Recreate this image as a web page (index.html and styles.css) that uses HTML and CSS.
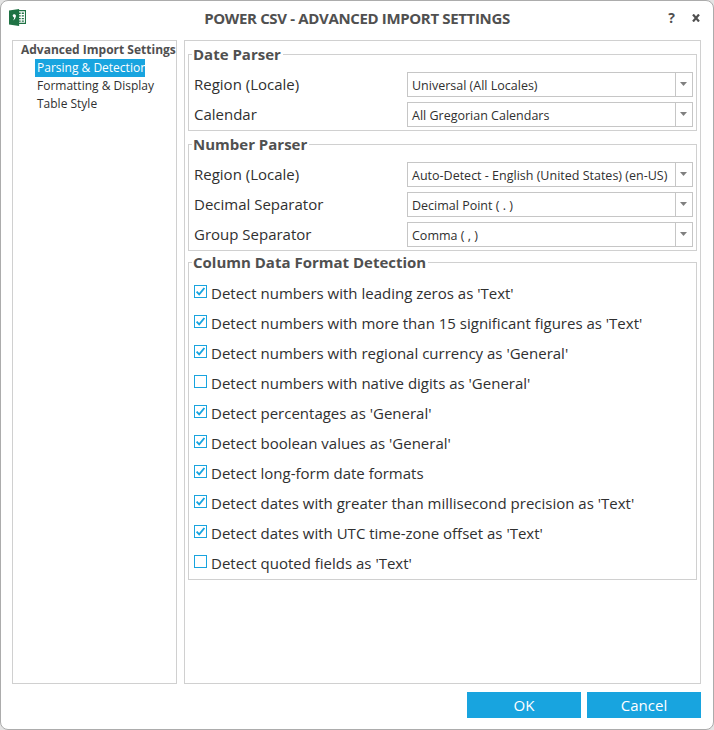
FILE: index.html
```html
<!DOCTYPE html>
<html lang="en">
<head>
<meta charset="utf-8">
<title>Power CSV - Advanced Import Settings</title>
<link rel="stylesheet" href="styles.css">
</head>
<body>
<svg class="defs" width="0" height="0">
  <symbol id="check" viewBox="0 0 13 13"><path d="M2.6 6.7L5.2 9.3L10.4 3" fill="none" stroke="#18a4df" stroke-width="1.9"/></symbol>
  <symbol id="arrow" viewBox="0 0 7 4"><path d="M0 0H7L3.5 4Z" fill="#808080"/></symbol>
</svg>
<main class="dialog">
  <header class="titlebar">
    <svg class="logo" viewBox="0 0 16 16">
      <path d="M9 1.5H15.5V13.5H9" fill="#fff" stroke="#1f7244"/>
      <path d="M9 4H11M9 6.5H11M9 9H11M9 11.5H11M12 4H14M12 6.5H14M12 9H14M12 11.5H14" stroke="#1f7244" stroke-width="1.2"/>
      <path d="M0 1.3L9.5 0V16L0 14.5Z" fill="#1f7244"/>
      <path d="M3.4 6.2a1.6 1.6 0 1 1 3.1.8Q6.200 9.600 3.700 10.800Q4.900 9.400 4.900 8.200Q3.600 7.700 3.400 6.200Z" fill="#fff"/>
    </svg>
    <h1>POWER CSV - ADVANCED IMPORT SETTINGS</h1>
    <div class="controls"><span class="help">?</span>
      <svg class="close" viewBox="0 0 8 8"><path d="M1 .5L7 7.500M7 .5L1 7.500" stroke="#505050" stroke-width="2.200"/></svg>
    </div>
  </header>
  <div class="body">
    <nav class="tree">
      <div class="root">Advanced Import Settings</div>
      <div class="item selected"><span>Parsing &amp; Detection</span></div>
      <div class="item"><span>Formatting &amp; Display</span></div>
      <div class="item"><span>Table Style</span></div>
    </nav>
    <section class="panel">
      <fieldset class="date">
        <legend>Date Parser</legend>
        <div class="field"><label>Region (Locale)</label><div class="combo"><span>Universal (All Locales)</span><i><svg><use href="#arrow"/></svg></i></div></div>
        <div class="field"><label>Calendar</label><div class="combo"><span>All Gregorian Calendars</span><i><svg><use href="#arrow"/></svg></i></div></div>
      </fieldset>
      <fieldset class="number">
        <legend>Number Parser</legend>
        <div class="field"><label>Region (Locale)</label><div class="combo"><span>Auto-Detect - English (United States) (en-US)</span><i><svg><use href="#arrow"/></svg></i></div></div>
        <div class="field"><label>Decimal Separator</label><div class="combo"><span>Decimal Point ( . )</span><i><svg><use href="#arrow"/></svg></i></div></div>
        <div class="field"><label>Group Separator</label><div class="combo"><span>Comma ( , )</span><i><svg><use href="#arrow"/></svg></i></div></div>
      </fieldset>
      <fieldset class="detect">
        <legend>Column Data Format Detection</legend>
        <div class="option"><b><svg><use href="#check"/></svg></b><span>Detect numbers with leading zeros as 'Text'</span></div>
        <div class="option"><b><svg><use href="#check"/></svg></b><span>Detect numbers with more than 15 significant figures as 'Text'</span></div>
        <div class="option"><b><svg><use href="#check"/></svg></b><span>Detect numbers with regional currency as 'General'</span></div>
        <div class="option"><b></b><span>Detect numbers with native digits as 'General'</span></div>
        <div class="option"><b><svg><use href="#check"/></svg></b><span>Detect percentages as 'General'</span></div>
        <div class="option"><b><svg><use href="#check"/></svg></b><span>Detect boolean values as 'General'</span></div>
        <div class="option"><b><svg><use href="#check"/></svg></b><span>Detect long-form date formats</span></div>
        <div class="option"><b><svg><use href="#check"/></svg></b><span>Detect dates with greater than millisecond precision as 'Text'</span></div>
        <div class="option"><b><svg><use href="#check"/></svg></b><span>Detect dates with UTC time-zone offset as 'Text'</span></div>
        <div class="option"><b></b><span>Detect quoted fields as 'Text'</span></div>
      </fieldset>
    </section>
  </div>
  <footer class="actions"><button>OK</button><button>Cancel</button></footer>
</main>
</body>
</html>
```
FILE: styles.css
```css
* { box-sizing: border-box; }
body { margin: 0; background: #e4e4e4; font-family: "Open Sans", "Noto Sans", sans-serif; color: #303030; white-space: nowrap; }
.defs { display: block; height: 0; }
.dialog { width: 714px; height: 730px; border: 1px solid #acacac; border-radius: 8px; background: #fff; padding: 0 12px 0 11px; }
.titlebar { height: 39px; display: grid; grid-template-columns: 100px 1fr 100px; margin: 0 -12px 0 -11px; }
.logo { width: 17px; height: 17px; margin: 8px 0 0 8px; }
h1 { margin: 0; font-size: 15px; line-height: 34px; font-weight: 700; color: #505050; text-align: center; letter-spacing: -0.35px; }
.controls { display: flex; justify-content: flex-end; padding: 7px 13px 0 0; gap: 17px; }
.help { font-size: 14px; line-height: 20px; font-weight: 700; color: #505050; }
.close { width: 8px; height: 8px; margin-top: 6px; }
.body { display: flex; gap: 7px; height: 644px; }
.tree { width: 165px; border: 1px solid #d0d0d0; font-size: 12px; line-height: 18px; }
.root { font-weight: 700; color: #505050; padding-left: 8px; }
.item { padding-left: 22px; height: 18px; }
.item span { display: inline-block; padding: 0 2px; height: 18px; line-height: 18px; }
.selected span { background: #18a4df; color: #fff; width: 110px; }
.panel { width: 517px; border: 1px solid #d0d0d0; padding: 3px; }
fieldset { position: relative; margin: 0; border: 1px solid #d0d0d0; min-width: 0; padding: 17px 4px 0 5px; width: 509px; }
legend { position: absolute; left: 3px; top: -11px; padding: 0 2px 0 1px; background: #fff; font-size: 15px; line-height: 20px; font-weight: 700; color: #505050; }
.date { margin-top: 10px; height: 77px; }
.number { margin-top: 13px; height: 107px; }
.detect { margin-top: 11px; height: 318px; padding-top: 15px; }
.field { display: flex; justify-content: space-between; height: 25px; margin-bottom: 5px; }
label { font-size: 15px; line-height: 25px; }
.combo { width: 286px; height: 25px; border: 1px solid #c6c6c6; display: flex; justify-content: space-between; font-size: 12.500px; line-height: 25px; padding-left: 4px; margin-right: -1px; }
.field { padding-right: 0; }
.combo i { width: 17px; border-left: 1px solid #c6c6c6; padding: 9px 0 0 4px; line-height: 0; }
.combo svg { width: 7px; height: 4px; }
.option { display: flex; height: 30px; gap: 4px; font-size: 15px; line-height: 30px; }
.option b { width: 13px; height: 13px; border: 1px solid #18a4df; margin-top: 7px; line-height: 0; }
.option svg { width: 13px; height: 13px; margin: -1px; }
.actions { display: flex; justify-content: flex-end; gap: 6px; padding-top: 8px; }
button { width: 114px; height: 26px; border: 0; padding: 0; background: #18a4df; color: #fff; font: 15px/26px "Open Sans", sans-serif; }
```
